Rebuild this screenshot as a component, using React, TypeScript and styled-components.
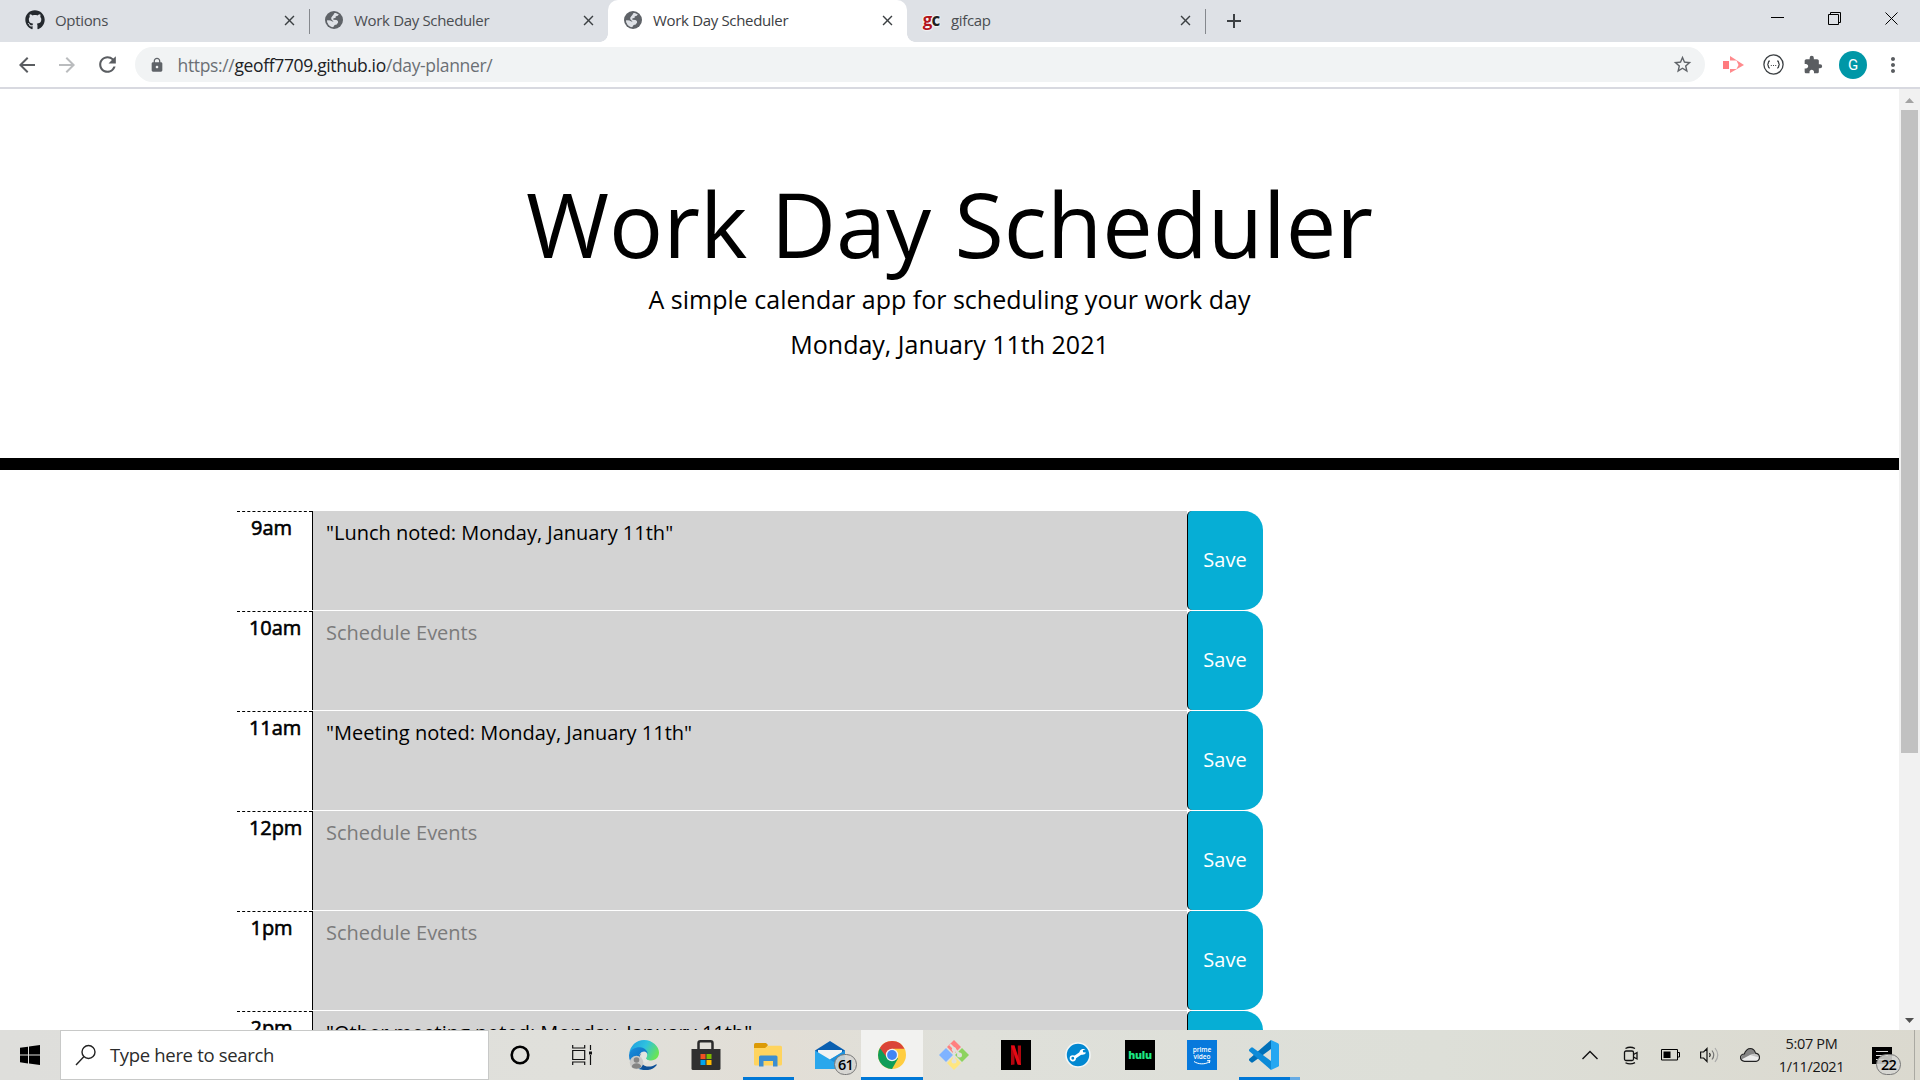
import React from "react";
import styled, { createGlobalStyle } from "styled-components";
import { FaGithub } from "react-icons/fa";
import {
  MdAdd, MdArrowBack, MdArrowForward, MdClose, MdExtension, MdLock, MdMoreVert, MdRefresh, MdStarBorder,
} from "react-icons/md";

const Global = createGlobalStyle`
  * { box-sizing: border-box; }
  body { margin: 0; overflow: hidden; background: #fff; font-family: "Open Sans", "Noto Sans", sans-serif; }
  svg { display: block; flex: none; }
`;

const Screen = styled.div`
  width: 1920px;
  height: 1080px;
  display: flex;
  flex-direction: column;
  overflow: hidden;
`;

/* ---------- browser chrome ---------- */

const TabStrip = styled.header`
  height: 42px;
  display: flex;
  background: #dee1e6;
`;

const TabList = styled.div`
  display: flex;
  padding-left: 10px;
`;

const Tab = styled.div<{ $active?: boolean; $width: number; $inset: number }>`
  position: relative;
  width: ${(p) => p.$width}px;
  height: 42px;
  display: flex;
  align-items: center;
  padding: 0 11px 2px ${(p) => p.$inset}px;
  color: ${(p) => (p.$active ? "#3c4043" : "#4a4d51")};
  background: ${(p) => (p.$active ? "#fff" : "transparent")};
  border-radius: 10px 10px 0 0;
  &::before, &::after {
    content: "";
    display: ${(p) => (p.$active ? "block" : "none")};
    position: absolute;
    bottom: 0;
    width: 8px;
    height: 8px;
  }
  &::before { left: -8px; background: radial-gradient(circle at 0 0, transparent 7.5px, #fff 8px); }
  &::after { right: -8px; background: radial-gradient(circle at 100% 0, transparent 7.5px, #fff 8px); }
`;

const Favicon = styled.span`
  width: 20px;
  display: flex;
  justify-content: center;
  color: #5f6368;
`;

const TabTitle = styled.span`
  flex: 1;
  margin-left: 10px;
  font-size: 15px;
  line-height: 20px;
  letter-spacing: -0.33px;
  white-space: nowrap;
`;

const Divider = styled.i`
  width: 1px;
  height: 25px;
  margin-top: 9px;
  background: #85888d;
`;

const GcMark = styled.b`
  font-size: 17px;
  line-height: 18px;
  letter-spacing: -1px;
  color: #222;
  text-shadow: 0 0 2px #fff, 0 0 2px #fff, 0 0 2px #fff;
  span { color: #b3151c; }
`;

const NewTab = styled.div`
  width: 56px;
  display: flex;
  align-items: center;
  justify-content: center;
  color: #3c4043;
`;

const WindowButtons = styled.div`
  margin-left: auto;
  display: flex;
  height: 37px;
`;

const WindowButton = styled.div`
  width: 57px;
  display: flex;
  align-items: center;
  justify-content: center;
`;

const Toolbar = styled.div`
  height: 47px;
  display: flex;
  align-items: center;
  padding-left: 7px;
  border-bottom: 2px solid #d8d9e0;
  background: #fff;
`;

const ToolSlot = styled.div<{ $faded?: boolean }>`
  width: 40px;
  display: flex;
  justify-content: center;
  color: ${(p) => (p.$faded ? "#babcbe" : "#5a5d61")};
`;

const Omnibox = styled.div`
  width: 1570px;
  height: 35px;
  margin: 0 8px 0 8px;
  padding: 0 12px 0 14px;
  display: flex;
  align-items: center;
  border-radius: 18px;
  background: #f1f3f4;
  color: #5f6368;
`;

const Url = styled.span`
  flex: 1;
  margin-left: 12.5px;
  font-size: 17.5px;
  line-height: 24px;
  letter-spacing: -0.35px;
  color: #6b6f74;
  span { color: #202124; }
`;

const Avatar = styled.div`
  width: 28px;
  height: 28px;
  border-radius: 50%;
  background: #0097a7;
  color: #fff;
  font: 15px/28px Roboto, sans-serif;
  text-align: center;
`;

/* ---------- page ---------- */

const Viewport = styled.div`
  height: 941px;
  display: flex;
  overflow: hidden;
`;

const Page = styled.main`
  width: 1899px;
  height: 941px;
  overflow: hidden;
  color: #000;
`;

const Jumbotron = styled.section`
  height: 381px;
  padding-top: 80px;
  margin-bottom: 41px;
  border-bottom: 12px solid #000;
  text-align: center;
`;

const Title = styled.h1`
  margin: 0 0 3px;
  font-size: 90px;
  font-weight: 400;
  line-height: 108px;
`;

const Lead = styled.p`
  margin: 0 0 7px;
  font-size: 25px;
  line-height: 38px;
`;

const Planner = styled.section`
  width: 1026px;
  margin-left: 237px;
`;

const TimeBlock = styled.div`
  height: 100px;
  display: flex;
`;

const Hour = styled.div`
  width: 75px;
  height: 99px;
  padding: 2px 18px 0 12px;
  border-top: 1px dashed #000;
  font-size: 20px;
  line-height: 28px;
  letter-spacing: -0.1px;
  text-align: center;
  white-space: nowrap;
  -webkit-text-stroke: 0.6px #000;
`;

const EventText = styled.div<{ $empty?: boolean }>`
  width: 875px;
  height: 99px;
  padding: 8px 13px;
  border-left: 1px solid #000;
  background: #d3d3d3;
  color: ${(p) => (p.$empty ? "#7b7b7b" : "#000")};
  font-size: 20px;
  line-height: 28px;
`;

const SaveButton = styled.button`
  width: 76px;
  height: 99px;
  padding: 0 1px 2px 0;
  border: 0;
  border-left: 1px solid #000;
  border-radius: 5px 19px 19px 5px;
  background: #06aed5;
  color: #fff;
  font-family: inherit;
  font-size: 20px;
  line-height: 30px;
`;

const Scrollbar = styled.aside`
  width: 21px;
  display: flex;
  flex-direction: column;
  align-items: center;
  justify-content: space-between;
  background: #f1f1f1;
`;

const Arrow = styled.div<{ $down?: boolean }>`
  height: 21px;
  display: flex;
  align-items: center;
  padding-top: 2px;
  color: ${(p) => (p.$down ? "#505050" : "#a3a3a3")};
  svg { transform: ${(p) => (p.$down ? "rotate(180deg)" : "none")}; }
`;

const Thumb = styled.div`
  width: 17px;
  height: 643px;
  margin-bottom: auto;
  background: #c1c1c1;
`;

/* ---------- taskbar ---------- */

const Taskbar = styled.footer`
  height: 50px;
  display: flex;
  background: linear-gradient(90deg, #dededb 0%, #e0e0db 30%, #e2ded6 41%, #dfe0da 50%, #dddfd8 75%, #dbd9cf 100%);
`;

const StartButton = styled.div`
  width: 60px;
  display: flex;
  align-items: center;
  justify-content: center;
`;

const SearchBox = styled.div`
  width: 429px;
  height: 50px;
  display: flex;
  align-items: center;
  padding-left: 14px;
  border: 1px solid #c8c9c8;
  background: #fff;
  color: #2b2b2b;
`;

const SearchText = styled.span`
  margin: 0 0 0 13px;
  font-size: 18.5px;
  line-height: 26px;
  letter-spacing: -0.33px;
`;

const AppSlot = styled.div<{ $active?: boolean; $bar?: number }>`
  position: relative;
  width: 62px;
  height: 50px;
  display: flex;
  align-items: center;
  justify-content: center;
  background: ${(p) => (p.$active ? "#f2f2f0" : "transparent")};
  &::after {
    content: "";
    position: absolute;
    bottom: 0;
    width: ${(p) => p.$bar ?? 0}px;
    height: 3px;
    background: #0078d7;
  }
`;

const ExtraBar = styled.i`
  position: absolute;
  right: 5px;
  bottom: 0;
  width: 10px;
  height: 3px;
  z-index: 1;
  transform: translateX(10px);
  background: #66abe4;
`;

const Badge = styled.span<{ $left: number; $size: number }>`
  position: absolute;
  left: ${(p) => p.$left}px;
  top: 24px;
  width: ${(p) => p.$size}px;
  height: 21px;
  border: 1px solid #777;
  border-radius: 12px;
  background: rgba(213, 213, 210, 0.88);
  color: #000;
  font-size: 14.5px;
  font-weight: 600;
  line-height: 19px;
  letter-spacing: -0.8px;
  text-align: center;
`;

const Tile = styled.div<{ $bg: string; $color: string }>`
  width: 30px;
  height: 30px;
  display: flex;
  flex-direction: column;
  align-items: center;
  justify-content: center;
  background: ${(p) => p.$bg};
  color: ${(p) => p.$color};
`;

const HuluText = styled.b`
  font: 800 10.5px/12px "Open Sans", sans-serif;
  letter-spacing: -0.3px;
`;

const PrimeText = styled.span`
  display: block;
  font: 600 6.5px/7px "Open Sans", sans-serif;
  text-align: center;
`;

const Tray = styled.div`
  margin-left: auto;
  display: flex;
`;

const TraySlot = styled.div<{ $width?: number }>`
  position: relative;
  width: ${(p) => p.$width ?? 40}px;
  display: flex;
  align-items: center;
  justify-content: center;
`;

const Clock = styled.div`
  width: 83px;
  margin-right: 1px;
  padding-top: 2px;
  color: #161616;
  font-size: 14.5px;
  line-height: 23px;
  text-align: center;
  letter-spacing: -0.35px;
  white-space: nowrap;
`;

const ShowDesktop = styled.div`
  width: 6px;
  border-left: 1px solid #aaa9a2;
`;

/* ---------- drawings ---------- */

const GlobeIcon = () => (
  <svg width="18" height="18" viewBox="0 0 18 18">
    <circle cx="9" cy="9" r="9" fill="#5f6368" />
    <path
      d="M9.500 2c1.800 0 3.200.5 4.400 1.600L12.300 5l-1.500.3-.3 1.700-2 .3-.2 1.500 3.200.2q2 .8 1.600 2.400l-1.400 2-2 .5-1.700 2.300Q3.200 15.500 2 9.500l3 .3 2 .9 1.600-.4-1.900-1.300-.6-2.100 1.100-1.700L8.300 4z"
      fill="#dee1e6"
    />
    <path d="M2 9.500l3.500 0 3 2-.7 1.600 1 1.200-.8 1.700Q2.700 15 2 9.500z" fill="#dee1e6" />
  </svg>
);

const EdgeLogo = () => (
  <svg width="30" height="30" viewBox="0 0 30 30">
    <defs>
      <linearGradient id="edgeTop" x1="0" y1="0.2" x2="1" y2="0.6">
        <stop offset="0" stopColor="#1e9fe0" />
        <stop offset="0.5" stopColor="#2fc2df" />
        <stop offset="1" stopColor="#6be552" />
      </linearGradient>
      <linearGradient id="edgeBody" x1="0" y1="0" x2="0.7" y2="1">
        <stop offset="0" stopColor="#1b8fdd" />
        <stop offset="1" stopColor="#0863b6" />
      </linearGradient>
    </defs>
    <path d="M0.2 14C1 5.600 7.500 0 15 0c8.500 0 15 6.500 15 12.600 0 5-3.600 7.800-7.800 7.800-3.700 0-5.600-1.500-5.200-2.500 2.600-2.400 1.200-8.400-5.500-9.200C6.600 8.200 1.500 10.500.2 14z" fill="url(#edgeTop)" />
    <path d="M.2 14C1.500 9 6.700 6.900 11 7.200c5 .4 8 4 7.700 7.300-.2-1.600-1.600-3-3.700-3-5.500 0-7.200 9.500-1 14.500 2 2 5 3.500 5 3.500C9.500 32 0 25 0 15.500z" fill="url(#edgeBody)" />
    <path d="M12 13.500c-2.700 4.200-1.200 10 3.600 12.200 4 1.800 8.700.6 11.200-1.200.7-.4 1.200.2.800.8C25.200 28.700 20.500 30.500 16 30c-8-1-9.500-11.500-4-16.500z" fill="#0d4f96" />
    <path d="M14.500 12c3 0 4 2.500 2.800 5.200-.8 1.700.3 2.600 2.500 3.200l-3 2.600c-4-1-6-8-2.300-11z" fill="#e4e5e1" />
    <circle cx="7.500" cy="22.500" r="6.800" fill="#c9c9c8" />
    <circle cx="7.500" cy="20" r="2.800" fill="#858585" />
    <path d="M2.800 27c0-5 9.400-5 9.400 0-2.500 2.300-7 2.300-9.400 0z" fill="#858585" />
  </svg>
);

const StoreLogo = () => (
  <svg width="30" height="30" viewBox="0 0 30 30">
    <path d="M7.500 9V3.200Q7.500 1.300 9.400 1.300h10.200q1.900 0 1.900 1.900V9" fill="none" stroke="#2b2b2b" strokeWidth="2.500" />
    <path d="M.5 9h29V28.500q0 1.500-1.500 1.500H2Q.5 30 .5 28.500z" fill="#303030" />
    <path d="M9.500 14h5v5h-5z" fill="#f25022" /><path d="M15.500 14h5v5h-5z" fill="#7fba00" />
    <path d="M9.500 20h5v5h-5z" fill="#00a4ef" /><path d="M15.500 20h5v5h-5z" fill="#ffb900" />
  </svg>
);

const ExplorerLogo = () => (
  <svg width="28" height="24" viewBox="0 0 28 24">
    <path d="M0 1.500Q0 0 1.500 0H12l2 2-2 3H0z" fill="#dc9a06" />
    <path d="M0 5h11l3-2.200h12.500q1.500 0 1.500 1.500V21q0 1.500-1.500 1.500h-25Q0 22.500 0 21z" fill="#ffd45e" />
    <path d="M5 23.500V14q0-1.500 1.500-1.500h15.500q1.500 0 1.500 1.500v9.500h-4.500V18h-9.500v5.500z" fill="#3c8ed0" />
  </svg>
);

const MailLogo = () => (
  <svg width="30" height="28" viewBox="0 0 30 28">
    <path d="M0 9.500L15 0l15 9.500V13H0z" fill="#0a5fb0" />
    <path d="M3 9h24v9l-12 4L3 18z" fill="#f2f2f2" />
    <path d="M0 9.500L15 18.500 30 9.500V28H0z" fill="#2aa7ec" />
    <path d="M15 18.500L30 9.500V28z" fill="#1d90dc" />
  </svg>
);

const ChromeLogo = () => (
  <svg width="28" height="28" viewBox="0 0 28 28">
    <circle cx="14" cy="14" r="14" fill="#ffcd40" />
    <path d="M14 14L1.900 7A14 14 0 0 0 14 28l6-10.500z" fill="#0f9d58" />
    <path d="M14 7.800h12.500A14 14 0 0 0 1.900 7L8 15.500z" fill="#db4437" />
    <circle cx="14" cy="14" r="6.200" fill="#f3f3f3" />
    <circle cx="14" cy="14" r="4.900" fill="#4285f4" />
  </svg>
);

const GitLogo = () => (
  <svg width="30" height="30" viewBox="0 0 30 30">
    <path d="M15 0l7 7-7 7-7-7z" fill="#ff8080" />
    <path d="M7 8l7 7-7 7-7-7z" fill="#80b3ff" />
    <path d="M23 8l7 7-7 7-7-7z" fill="#8dd35f" />
    <path d="M15 16l7 7-7 7-7-7z" fill="#ffe680" />
    <path d="M11 4.500l4 4V21M15.500 9l5 5.500" fill="none" stroke="#e0e1dc" strokeWidth="2.200" />
    <circle cx="15" cy="9.500" r="2.200" fill="#e0e1dc" /><circle cx="20.500" cy="15" r="2.500" fill="#e0e1dc" />
    <circle cx="15" cy="21" r="2.500" fill="#e0e1dc" />
  </svg>
);

const NetflixN = () => (
  <svg width="12" height="20" viewBox="0 0 12 20">
    <path d="M1 .5h3.500v19L1 20zM7.800.5H11V20l-3.200-.5z" fill="#b1060f" />
    <path d="M1 .5h3.500L11 20l-3.500-.5z" fill="#e50914" />
  </svg>
);

const WrenchLogo = () => (
  <svg width="26" height="26" viewBox="0 0 26 26">
    <circle cx="13" cy="13" r="12" fill="#0288d1" stroke="#f4f6f6" strokeWidth="1.600" />
    <path d="M9.500 15.500l8-5.500" stroke="#fff" strokeWidth="3" />
    <circle cx="7.800" cy="16.300" r="2.300" fill="none" stroke="#fff" strokeWidth="1.700" />
    <path d="M20.500 7.300l-2.700 1 .3 2 2.900.3c-1 2.500-4.500 3-6 1-1.300-2.500.7-5.500 5.500-4.300z" fill="#fff" />
  </svg>
);

const PrimeSmile = () => (
  <svg width="18" height="5" viewBox="0 0 18 5">
    <path d="M1 1.500c4.500 3 11 3.200 15.500.2M14 .8l3-.3-.7 2.600" fill="none" stroke="#fff" strokeWidth="1" />
  </svg>
);

const CodeLogo = () => (
  <svg width="30" height="30" viewBox="0 0 30 30">
    <path d="M22 0v9L4 22.300q-1 .7-2 0L.4 20.800q-1-1 0-2z" fill="#0070b8" />
    <path d="M22 30v-9L4 7.700q-1-.7-2 0L.4 9.200q-1 1 0 2z" fill="#0d8bd8" />
    <path d="M22 0l7 3.200q1 .5 1 1.600v20.400q0 1.100-1 1.600L22 30z" fill="#26a7f2" />
  </svg>
);

const CastIcon = () => (
  <svg width="21" height="18" viewBox="0 0 21 18">
    <path d="M7 0v17L21 9z" fill="#ff8a8d" />
    <path d="M6 4.500h7.500l2 4.500-2 4H6z" fill="#fff" />
    <path d="M0 5h6v8H0z" fill="#ff7b7f" />
  </svg>
);

const BracesIcon = () => (
  <svg width="21" height="21" viewBox="0 0 21 21" fill="none" stroke="#3c4043">
    <circle cx="10.500" cy="10.500" r="9.600" strokeWidth="1.300" />
    <path d="M6.800 7q-1.400 0-1.400 1.500 0 2-1.200 2 1.200 0 1.200 2Q5.400 14 6.800 14M14.200 7q1.400 0 1.400 1.500 0 2 1.200 2-1.200 0-1.200 2 0 1.500-1.400 1.500" strokeWidth="1.300" />
    <path d="M7.800 11.500h1M10 11.500h1M12.200 11.500h1" strokeWidth="1" />
  </svg>
);

const ArrowShape = () => (
  <svg width="9" height="5" viewBox="0 0 9 5"><path d="M4.500 0L9 5H0z" fill="currentColor" /></svg>
);

const WindowsLogo = () => (
  <svg width="20" height="20" viewBox="0 0 20 20">
    <path d="M0 2.800l8-1.100v7.900H0zM9 1.500L20 0v9.600H9zM0 10.500h8v7.900l-8-1.100zM9 10.500h11V20L9 18.500z" />
  </svg>
);

const SearchGlyph = () => (
  <svg width="22" height="22" viewBox="0 0 22 22" fill="none" stroke="#222" strokeWidth="1.400">
    <circle cx="13.500" cy="8" r="6.500" /><path d="M9 12.500L1 21" />
  </svg>
);

const TaskViewGlyph = () => (
  <svg width="20" height="20" viewBox="0 0 20 20" fill="none" stroke="#111" strokeWidth="1.200">
    <path d="M.7 5.500h12v9h-12zM.7 0v3h12V0M.7 20v-3h12v3M18.500 0v5M18.500 10v10" />
    <path d="M17 6.500h3v3h-3z" fill="#111" stroke="none" />
  </svg>
);

const tabs = [
  { title: "Options", kind: "github", width: 299, inset: 15 },
  { title: "Work Day Scheduler", kind: "globe", width: 298, inset: 14 },
  { title: "Work Day Scheduler", kind: "globe", width: 299, inset: 15, active: true },
  { title: "gifcap", kind: "gc", width: 298, inset: 14 },
];

const blocks = [
  { hour: "9am", text: '"Lunch noted: Monday, January 11th"' },
  { hour: "10am", text: "" },
  { hour: "11am", text: '"Meeting noted: Monday, January 11th"' },
  { hour: "12pm", text: "" },
  { hour: "1pm", text: "" },
  { hour: "2pm", text: '"Other meeting noted: Monday, January 11th"' },
];

const TabIcon = ({ kind }: { kind: string }) => (
  <Favicon>
    {kind === "github" && <FaGithub size={20} color="#24292e" />}
    {kind === "globe" && <GlobeIcon />}
    {kind === "gc" && <GcMark><span>g</span>c</GcMark>}
  </Favicon>
);

function BrowserChrome() {
  return (
    <>
      <TabStrip>
        <TabList>
          {tabs.map((t, i) => (
            <React.Fragment key={i}>
              <Tab $active={t.active} $width={t.width} $inset={t.inset}>
                <TabIcon kind={t.kind} />
                <TabTitle>{t.title}</TabTitle>
                <MdClose size={17} color="#3c4043" />
              </Tab>
              {(i === 0 || i === 3) && <Divider />}
            </React.Fragment>
          ))}
        </TabList>
        <NewTab><MdAdd size={24} /></NewTab>
        <WindowButtons>
          <WindowButton><svg width="13" height="13"><path d="M0 5.500h13" stroke="#000" /></svg></WindowButton>
          <WindowButton>
            <svg width="13" height="13" fill="none" stroke="#000"><path d="M.5 2.500h10v10H.5zM2.500 2.500v-2h10v10h-2" /></svg>
          </WindowButton>
          <WindowButton><svg width="13" height="13"><path d="M.5.5l12 12M12.500.5l-12 12" stroke="#000" /></svg></WindowButton>
        </WindowButtons>
      </TabStrip>
      <Toolbar>
        <ToolSlot><MdArrowBack size={24} /></ToolSlot>
        <ToolSlot $faded><MdArrowForward size={24} /></ToolSlot>
        <ToolSlot><MdRefresh size={25} /></ToolSlot>
        <Omnibox>
          <MdLock size={16} />
          <Url>https://<span>geoff7709.github.io</span>/day-planner/</Url>
          <MdStarBorder size={21} />
        </Omnibox>
        <ToolSlot><CastIcon /></ToolSlot>
        <ToolSlot><BracesIcon /></ToolSlot>
        <ToolSlot><MdExtension size={20} /></ToolSlot>
        <ToolSlot><Avatar>G</Avatar></ToolSlot>
        <ToolSlot><MdMoreVert size={24} /></ToolSlot>
      </Toolbar>
    </>
  );
}

function Scheduler() {
  return (
    <Page>
      <Jumbotron>
        <Title>Work Day Scheduler</Title>
        <Lead>A simple calendar app for scheduling your work day</Lead>
        <Lead>Monday, January 11th 2021</Lead>
      </Jumbotron>
      <Planner>
        {blocks.map((b) => (
          <TimeBlock key={b.hour}>
            <Hour>{b.hour}</Hour>
            <EventText $empty={!b.text}>{b.text || "Schedule Events"}</EventText>
            <SaveButton>Save</SaveButton>
          </TimeBlock>
        ))}
      </Planner>
    </Page>
  );
}

function WindowsTaskbar() {
  return (
    <Taskbar>
      <StartButton><WindowsLogo /></StartButton>
      <SearchBox>
        <SearchGlyph />
        <SearchText>Type here to search</SearchText>
      </SearchBox>
      <AppSlot><svg width="20" height="20"><circle cx="10" cy="10" r="8.300" fill="none" stroke="#000" strokeWidth="2.600" /></svg></AppSlot>
      <AppSlot><TaskViewGlyph /></AppSlot>
      <AppSlot><EdgeLogo /></AppSlot>
      <AppSlot><StoreLogo /></AppSlot>
      <AppSlot $bar={51}><ExplorerLogo /></AppSlot>
      <AppSlot><MailLogo /><Badge $left={35} $size={23}>61</Badge></AppSlot>
      <AppSlot $active $bar={62}><ChromeLogo /></AppSlot>
      <AppSlot><GitLogo /></AppSlot>
      <AppSlot><Tile $bg="#000" $color="#e50914"><NetflixN /></Tile></AppSlot>
      <AppSlot><WrenchLogo /></AppSlot>
      <AppSlot><Tile $bg="#000" $color="#1ce783"><HuluText>hulu</HuluText></Tile></AppSlot>
      <AppSlot>
        <Tile $bg="#0779dc" $color="#fff">
          <PrimeText>prime</PrimeText>
          <PrimeText>video</PrimeText>
          <PrimeSmile />
        </Tile>
      </AppSlot>
      <AppSlot $bar={51}><CodeLogo /><ExtraBar /></AppSlot>
      <Tray>
        <TraySlot><svg width="16" height="10"><path d="M.5 9L8 1.500 15.500 9" fill="none" stroke="#111" strokeWidth="1.400" /></svg></TraySlot>
        <TraySlot>
          <svg width="16" height="19" fill="none" stroke="#111" strokeWidth="1.300">
            <rect x="2.500" y="5" width="9" height="9.500" rx="1.500" /><path d="M11.500 8.500l3.500-2v6.500l-3.500-2M3.500 2.500Q8 0 13 2.500M3.500 16.700q4.500 2.500 9.500 0" />
          </svg>
        </TraySlot>
        <TraySlot>
          <svg width="19" height="12" fill="none" stroke="#000"><path d="M.5.500h16v10.500H.5zM17 3.500h1.500V8H17" /><path d="M2.500 2.500h7V9h-7z" fill="#000" stroke="none" /></svg>
        </TraySlot>
        <TraySlot>
          <svg width="20" height="18" fill="none" stroke="#111" strokeWidth="1.200">
            <path d="M.6 6h3L7 2.500v13L3.600 12h-3zM9.500 7q1.500 2 0 4" /><path d="M12 4.500q3.500 4.500 0 9" stroke="#777" /><path d="M15 2q5.500 7 0 14" stroke="#aaa" />
          </svg>
        </TraySlot>
        <TraySlot>
          <svg width="20" height="14" viewBox="0 0 20 14">
            <path d="M4.500 13.300q-4-.5-4-4 .3-3 3.700-3.300Q6.500.7 10.300.7t5.200 4.500q4 .8 4 4.300-.3 3.500-3.500 3.800z" fill="#ececec" />
            <path d="M1.300 11.500Q.8 6.500 4.500 6 6.500 1.300 10.300 1.300t4.700 4.500L10 7z" fill="#858585" />
            <path d="M10 7l5-1.500q3.500.5 4 4z" fill="#c4c4c4" />
            <path d="M4.500 13.300q-4-.5-4-4 .3-3 3.700-3.300Q6.500.7 10.300.7t5.200 4.500q4 .8 4 4.300-.3 3.500-3.500 3.800z" fill="none" stroke="#222" strokeWidth="1.200" />
          </svg>
        </TraySlot>
        <Clock>5:07 PM<br />1/11/2021</Clock>
        <TraySlot $width={60}>
          <svg width="24" height="20" viewBox="0 0 24 20"><path d="M0 2h20v17h-20z" /><path d="M4 6.500h12M4 10.500h12M4 14.500h8" stroke="#ddd" strokeWidth="1.200" /></svg>
          <Badge $left={22} $size={25}>22</Badge>
        </TraySlot>
        <ShowDesktop />
      </Tray>
    </Taskbar>
  );
}

export default function App() {
  return (
    <Screen>
      <Global />
      <BrowserChrome />
      <Viewport>
        <Scheduler />
        <Scrollbar>
          <Arrow><ArrowShape /></Arrow>
          <Thumb />
          <Arrow $down><ArrowShape /></Arrow>
        </Scrollbar>
      </Viewport>
      <WindowsTaskbar />
    </Screen>
  );
}
